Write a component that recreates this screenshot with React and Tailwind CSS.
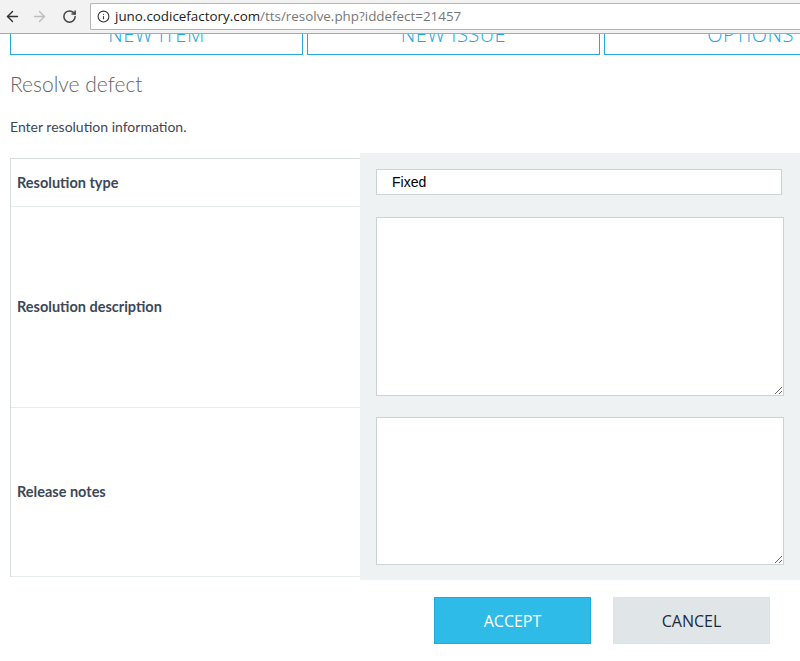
import { ArrowLeft, ArrowRight, RotateCw, Info } from "lucide-react";

const tabs = ["NEW ITEM", "NEW ISSUE", "OPTIONS"];

const rows = [
  { label: "Resolution type", h: "h-[48px]" },
  { label: "Resolution description", h: "h-[201px]" },
  { label: "Release notes", h: "h-[169px]" },
];

function BrowserBar() {
  return (
    <div className="relative z-10 flex h-[34px] items-center border-b border-[#a9a9a9] bg-[#f2f2f2]">
      <ArrowLeft size={17} strokeWidth={2} className="ml-[4px] text-[#333]" />
      <ArrowRight size={17} strokeWidth={2} className="ml-[10px] text-[#bdbdbd]" />
      <RotateCw size={15} strokeWidth={2.4} className="ml-[14px] text-[#444]" />
      <div className="ml-[13px] flex h-[27px] flex-1 items-center rounded-l-[2px] border border-r-0 border-[#b5b5b5] bg-white">
        <Info size={13} strokeWidth={2} className="ml-[6px] text-[#333]" />
        <span className="ml-[5px] font-['Open_Sans',sans-serif] text-[13.4px] text-[#222]">
          juno.codicefactory.com
          <span className="text-[#777]">/tts/resolve.php?iddefect=21457</span>
        </span>
      </div>
    </div>
  );
}

export default function App() {
  return (
    <div className="h-[661px] w-[800px] overflow-hidden bg-white font-['Lato',sans-serif]">
      <BrowserBar />
      <div className="overflow-hidden">
        <div className="-mt-[20px] ml-[10px] flex gap-[4px]">
          {tabs.map((t) => (
            <div
              key={t}
              className="flex h-[41px] w-[293px] shrink-0 items-center justify-center border-[1.5px] border-[#29a8da] font-['Open_Sans',sans-serif] text-[20px] font-light tracking-[0.5px] text-[#1ea7dc]"
            >
              {t}
            </div>
          ))}
        </div>

        <h1 className="ml-[10px] mt-[15px] text-[21px] font-light leading-[28px] text-[#666]">
          Resolve defect
        </h1>
        <p className="ml-[10px] mt-[20px] text-[14px] leading-[18px] text-[#3c4858]">
          Enter resolution information.
        </p>

        <div className="mt-[17px] flex items-start">
          <div className="ml-[10px] mt-[5px] w-[350px] border-l border-t border-[#d6dcdc]">
            {rows.map((r) => (
              <div
                key={r.label}
                className={`flex items-center border-b border-[#e6eaea] pl-[6px] text-[14.5px] font-bold text-[#3c4858] ${r.h}`}
              >
                {r.label}
              </div>
            ))}
          </div>
          <div className="flex h-[427px] flex-1 flex-col bg-[#eef2f3] pl-[16px] pt-[16px]">
            <div className="flex h-[26px] w-[406px] items-center border border-[#cdd3d5] bg-white pl-[15px] font-['Liberation_Sans',Arial,sans-serif] text-[14px] text-black">
              Fixed
            </div>
            <textarea className="mt-[22px] h-[179px] w-[408px] resize border border-[#cdd3d5] bg-white outline-none" />
            <textarea className="mt-[21px] h-[148px] w-[408px] resize border border-[#cdd3d5] bg-white outline-none" />
          </div>
        </div>

        <div className="mt-[17px] flex justify-end gap-[22px] pr-[30px] font-['Open_Sans',sans-serif] text-[16px]">
          <button className="h-[47px] w-[157px] border border-[#1eaadf] bg-[#2ebbe8] text-white">
            ACCEPT
          </button>
          <button className="h-[47px] w-[157px] border border-[#dde2e5] bg-[#e0e5e8] text-[#1c2b3b]">
            CANCEL
          </button>
        </div>
      </div>
    </div>
  );
}
